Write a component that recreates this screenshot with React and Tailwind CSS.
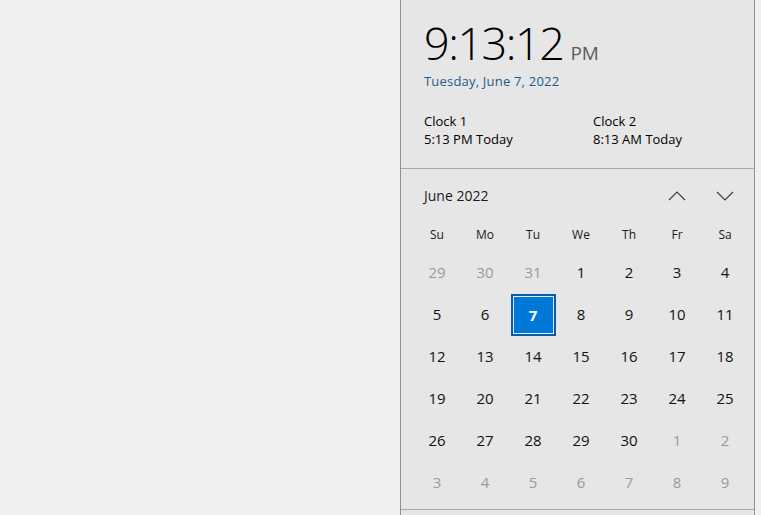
import React from "react";

const days = ["Su", "Mo", "Tu", "We", "Th", "Fr", "Sa"];
const weeks = [
  [[29, 0], [30, 0], [31, 0], [1, 1], [2, 1], [3, 1], [4, 1]],
  [[5, 1], [6, 1], [7, 2], [8, 1], [9, 1], [10, 1], [11, 1]],
  [[12, 1], [13, 1], [14, 1], [15, 1], [16, 1], [17, 1], [18, 1]],
  [[19, 1], [20, 1], [21, 1], [22, 1], [23, 1], [24, 1], [25, 1]],
  [[26, 1], [27, 1], [28, 1], [29, 1], [30, 1], [1, 0], [2, 0]],
  [[3, 0], [4, 0], [5, 0], [6, 0], [7, 0], [8, 0], [9, 0]],
];

function Chevron({ up }) {
  return (
    <svg width="18" height="10" viewBox="0 0 18 10" fill="none" stroke="#3a3a3a" strokeWidth="1.1">
      {up ? <polyline points="1,9 9,1 17,9" /> : <polyline points="1,1 9,9 17,1" />}
    </svg>
  );
}

export default function App() {
  return (
    <div
      className="w-[761px] h-[515px] flex bg-[#f0f0f0] overflow-hidden text-black"
      style={{ fontFamily: '"Segoe UI", "Open Sans", "Noto Sans", sans-serif' }}
    >
      <div className="w-[400px] shrink-0" />
      <div className="w-[355px] shrink-0 border-x border-[#8f8f8f] bg-[#e6e6e6] flex flex-col">
        <div className="h-[169px] border-b border-[#a8a8a8] pl-[23px] pt-[8px]">
          <div className="flex items-baseline">
            <span className="text-[45px] font-light leading-[70px] tracking-[-1.5px]">9:13:12</span>
            <span className="ml-[7px] text-[19px] text-[#5c5c5c]">PM</span>
          </div>
          <div className="text-[13px] leading-[18px] text-[#1d5a8e] mt-[-6px] tracking-[0.2px]">Tuesday, June 7, 2022</div>
          <div className="flex mt-[22px] text-[13px] leading-[18px]">
            <div className="w-[169px]">
              <div>Clock 1</div>
              <div>5:13 PM Today</div>
            </div>
            <div>
              <div>Clock 2</div>
              <div>8:13 AM Today</div>
            </div>
          </div>
        </div>
        <div className="h-[341px] border-b border-[#a8a8a8] flex flex-col">
          <div className="flex items-center h-[53px] pl-[23px] pr-[20px]">
            <span className="text-[14px] flex-1 text-[#1a1a1a]">June 2022</span>
            <div className="flex items-center gap-[30px]">
              <Chevron up />
              <Chevron />
            </div>
          </div>
          <div className="pl-[12px]">
            <div className="grid grid-cols-[repeat(7,48px)] h-[26px] items-center text-[12px] text-[#1a1a1a]">
              {days.map((d) => (
                <div key={d} className="text-center">{d}</div>
              ))}
            </div>
            <div className="grid grid-cols-[repeat(7,48px)] auto-rows-[42px] mt-[3px]">
              {weeks.flat().map(([n, t], i) => (
                <div key={i} className="flex items-center justify-center">
                  {t === 2 ? (
                    <div className="w-[45px] h-[42px] mt-[2px] border-2 border-[#0b5ca6] p-[1px] bg-[#dde9f5]">
                      <div className="w-full h-full bg-[#0078d7] flex items-center justify-center text-white font-bold text-[15px]">
                        {n}
                      </div>
                    </div>
                  ) : (
                    <span className={"text-[15px] " + (t === 0 ? "text-[#9a9a9a]" : "text-[#111111]")}>{n}</span>
                  )}
                </div>
              ))}
            </div>
          </div>
        </div>
      </div>
    </div>
  );
}
